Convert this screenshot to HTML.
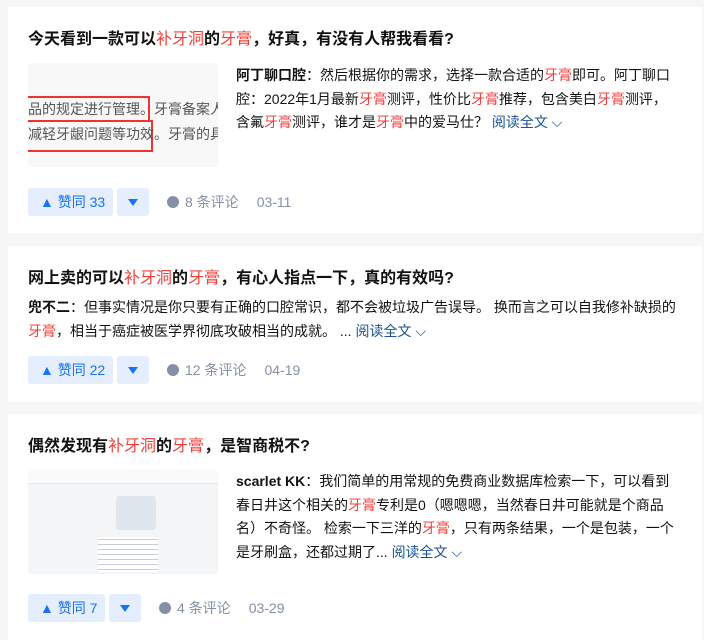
<!DOCTYPE html>
<html><head><meta charset="utf-8"><style>
body{margin:0;background:#f6f6f6;width:704px;height:640px;overflow:hidden;font-family:"Liberation Sans","Noto Sans CJK SC",sans-serif;}
.card{position:absolute;left:8px;width:694px;background:#fff;}
.t{position:absolute;left:20px;font-size:16px;font-weight:bold;color:#121212;white-space:nowrap;line-height:22px}
.t .r{font-weight:normal}
.r{color:#f1403c}
.img{position:absolute;left:20px;width:190px;background:#f8f8f8;border-radius:4px;overflow:hidden}
.txt{position:absolute;font-size:14px;line-height:23.7px;color:#121212;white-space:nowrap}
.txt b{font-weight:bold}
.more{color:#175199}
.bar{position:absolute;left:20px;height:28px;font-size:14px}
.up{position:absolute;left:0;top:0;height:28px;line-height:28px;background:#e5eeff;color:#1772f6;border-radius:3px;padding:0 12px;white-space:nowrap}
.dn{position:absolute;top:0;width:32px;height:28px;background:#e5eeff;border-radius:3px}
.meta{position:absolute;top:0;line-height:28px;color:#8590a6;white-space:nowrap}
.meta i{font-style:normal;margin-left:18px}
.dot{display:inline-block;width:12px;height:12px;border-radius:6px;background:#8590a6;vertical-align:-1px;margin-right:6px}
</style></head><body>

<div class="card" style="top:7px;height:226px">
 <div class="t" style="top:22px">今天看到一款可以<span class="r">补牙洞</span>的<span class="r">牙膏</span>，好真，有没有人帮我看看?</div>
 <div class="img" style="top:56px;height:104px">
  <div style="position:absolute;left:0;top:33px;width:120px;height:22px;border:2px solid #e33;border-left:none"></div>
  <div style="position:absolute;left:0;top:57px;width:123px;height:28px;border:2px solid #e33;border-left:none"></div>
  <div style="position:absolute;left:0;top:36px;font-size:14px;color:#555;white-space:nowrap;line-height:20px">品的规定进行管理。牙膏备案人<br><span style="line-height:30px">减轻牙龈问题等功效。牙膏的具</span></div>
 </div>
 <div class="txt" style="left:228px;top:57px"><b>阿丁聊口腔</b>：然后根据你的需求，选择一款合适的<span class="r">牙膏</span>即可。阿丁聊口<br>腔：2022年1月最新<span class="r">牙膏</span>测评，性价比<span class="r">牙膏</span>推荐，包含美白<span class="r">牙膏</span>测评，<br>含氟<span class="r">牙膏</span>测评，谁才是<span class="r">牙膏</span>中的爱马仕？ <span class="more">阅读全文 ⌵</span></div>
 <div class="bar" style="top:181px">
  <div class="up" style="width:61px;padding:0 12px 0 12px;width:61px">▲ 赞同 33</div>
  <div class="dn" style="left:89px"><svg width="32" height="28"><path d="M11 11h10l-5 7z" fill="#1772f6"/></svg></div>
  <div class="meta" style="left:139px"><span class="dot"></span>8 条评论<i>03-11</i></div>
 </div>
</div>

<div class="card" style="top:246px;height:156px">
 <div class="t" style="top:22px">网上卖的可以<span class="r">补牙洞</span>的<span class="r">牙膏</span>，有心人指点一下，真的有效吗?</div>
 <div class="txt" style="left:20px;top:50px"><b>兜不二</b>：但事实情况是你只要有正确的口腔常识，都不会被垃圾广告误导。 换而言之可以自我修补缺损的<br><span class="r">牙膏</span>，相当于癌症被医学界彻底攻破相当的成就。 ... <span class="more">阅读全文 ⌵</span></div>
 <div class="bar" style="top:110px">
  <div class="up" style="width:61px">▲ 赞同 22</div>
  <div class="dn" style="left:89px"><svg width="32" height="28"><path d="M11 11h10l-5 7z" fill="#1772f6"/></svg></div>
  <div class="meta" style="left:139px"><span class="dot"></span>12 条评论<i>04-19</i></div>
 </div>
</div>

<div class="card" style="top:414px;height:226px">
 <div class="t" style="top:22px">偶然发现有<span class="r">补牙洞</span>的<span class="r">牙膏</span>，是智商税不?</div>
 <div class="img" style="top:55px;height:105px;background:#f4f5f7">
  <div style="position:absolute;left:0;top:0;width:190px;height:14px;background:#fafafa;border-bottom:1px solid #e6e6e6"></div>
  <div style="position:absolute;left:88px;top:27px;width:40px;height:34px;background:#dfe6ee;border-radius:3px"></div>
  <div style="position:absolute;left:70px;top:68px;width:60px;height:35px;background:repeating-linear-gradient(#fff 0 2px,#c9ced6 2px 3px,#fff 3px 5px)"></div>
 </div>
 <div class="txt" style="left:228px;top:56px"><b>scarlet KK</b>：我们简单的用常规的免费商业数据库检索一下，可以看到<br>春日井这个相关的<span class="r">牙膏</span>专利是0（嗯嗯嗯，当然春日井可能就是个商品<br>名）不奇怪。 检索一下三洋的<span class="r">牙膏</span>，只有两条结果，一个是包装，一个<br>是牙刷盒，还都过期了... <span class="more">阅读全文 ⌵</span></div>
 <div class="bar" style="top:180px">
  <div class="up" style="width:53px">▲ 赞同 7</div>
  <div class="dn" style="left:81px"><svg width="32" height="28"><path d="M11 11h10l-5 7z" fill="#1772f6"/></svg></div>
  <div class="meta" style="left:131px"><span class="dot"></span>4 条评论<i>03-29</i></div>
 </div>
</div>
</body></html>
